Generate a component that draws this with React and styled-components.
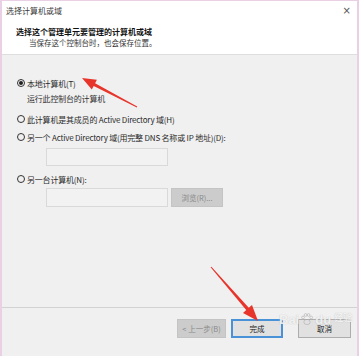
import React from 'react';
import styled, { createGlobalStyle } from 'styled-components';

const GlobalStyle = createGlobalStyle`
  html, body {
    margin: 0;
    padding: 0;
    background: #ffffff;
  }
  body {
    font-family: "Noto Sans CJK SC", "Noto Sans", sans-serif;
  }
`;

const Window = styled.div`
  position: relative;
  box-sizing: border-box;
  width: 359px;
  height: 356px;
  border: 2px solid #ead0e4;
  border-top-width: 1px;
  border-bottom: none;
  display: flex;
  flex-direction: column;
  background: #f0f0f0;
  overflow: hidden;
`;

const Header = styled.div`
  background: #ffffff;
  height: 54px;
  box-sizing: border-box;
  border-bottom: 1px solid #dedede;
  display: flex;
  flex-direction: column;
`;

const TitleBar = styled.div`
  height: 19px;
  display: flex;
  align-items: center;
  justify-content: space-between;
  padding: 0 6px 0 4px;
  font-size: 8px;
  color: #3a3a3a;
`;

const Close = styled.span`
  font-size: 10px;
  color: #555;
  font-family: "DejaVu Sans", sans-serif;
  line-height: 1;
`;

const Heading = styled.div`
  margin: 6px 0 0 14px;
  font-size: 8px;
  line-height: 11px;
  font-weight: bold;
  color: #111;
`;

const SubHeading = styled.div`
  margin-left: 27px;
  font-size: 7.5px;
  line-height: 11px;
  color: #333;
`;

const Body = styled.div`
  flex: 1;
  padding: 22px 0 0 15px;
  display: flex;
  flex-direction: column;
  align-items: flex-start;
`;

const RadioRow = styled.label`
  display: flex;
  align-items: center;
  gap: 2px;
  height: 12px;
  margin-top: ${(p) => p.$gap || 0}px;
  font-size: 8px;
  letter-spacing: -0.2px;
  color: #2a2a2a;
  white-space: nowrap;
`;

const Circle = styled.span`
  box-sizing: border-box;
  width: 8px;
  height: 8px;
  border-radius: 50%;
  border: 1px solid #333;
  display: flex;
  align-items: center;
  justify-content: center;
  &::after {
    content: '';
    display: ${(p) => (p.$on ? 'block' : 'none')};
    width: 4px;
    height: 4px;
    border-radius: 50%;
    background: #222;
  }
`;

const Desc = styled.div`
  margin: 4px 0 0 10px;
  height: 12px;
  line-height: 12px;
  font-size: 8px;
  letter-spacing: -0.2px;
  color: #333;
`;

const FieldRow = styled.div`
  display: flex;
  gap: 3px;
  margin: ${(p) => p.$gap}px 0 0 29px;
`;

const TextBox = styled.div`
  box-sizing: border-box;
  width: 122px;
  height: ${(p) => p.$h}px;
  border: 1px solid #d9d9d9;
  background: #f2f2f2;
`;

const Btn = styled.div`
  box-sizing: border-box;
  width: ${(p) => p.$w}px;
  height: 19px;
  display: flex;
  align-items: center;
  justify-content: center;
  font-size: 7.5px;
  white-space: nowrap;
  background: ${(p) => (p.$disabled ? '#cccccc' : '#e1e1e1')};
  color: ${(p) => (p.$disabled ? '#8a8a8a' : '#1a1a1a')};
  border: ${(p) =>
    p.$primary ? '2px solid #4a92d8' : p.$disabled ? '1px solid #c4c4c4' : '1px solid #adadad'};
`;

const Footer = styled.div`
  height: 37px;
  border-top: 1px solid #d2d2d2;
  display: flex;
  justify-content: flex-end;
  align-items: flex-start;
  padding: 11px 6px 0 0;
  gap: 5px;
`;

const Spacer = styled.span`
  width: 5px;
`;

const Watermark = styled.div`
  position: absolute;
  left: 277px;
  top: 311px;
  display: flex;
  align-items: flex-start;
  gap: 1px;
  font-family: "Liberation Sans", sans-serif;
  font-size: 13px;
  line-height: 15px;
  font-weight: bold;
  color: rgba(255, 255, 255, 0.8);
  text-shadow: 0 0 1px rgba(160, 160, 160, 0.7);
  pointer-events: none;
`;

const WmCn = styled.span`
  font-family: "Noto Sans CJK SC", sans-serif;
  font-size: 9px;
  line-height: 11px;
  margin-left: 2px;
`;

const Overlay = styled.svg`
  position: absolute;
  left: -2px;
  top: -1px;
  pointer-events: none;
`;

function arrowPoints(tx, ty, hx, hy, headLen, headW, w0, w1) {
  const dx = hx - tx;
  const dy = hy - ty;
  const len = Math.hypot(dx, dy);
  const ux = dx / len;
  const uy = dy / len;
  const nx = -uy;
  const ny = ux;
  const bx = hx - ux * headLen;
  const by = hy - uy * headLen;
  const pts = [
    [tx + (nx * w0) / 2, ty + (ny * w0) / 2],
    [bx + (nx * w1) / 2, by + (ny * w1) / 2],
    [bx + (nx * headW) / 2, by + (ny * headW) / 2],
    [hx, hy],
    [bx - (nx * headW) / 2, by - (ny * headW) / 2],
    [bx - (nx * w1) / 2, by - (ny * w1) / 2],
    [tx - (nx * w0) / 2, ty - (ny * w0) / 2],
  ];
  return pts.map((p) => p.map((v) => v.toFixed(1)).join(',')).join(' ');
}

function Arrows() {
  return (
    <Overlay width="360" height="356" viewBox="0 0 360 356">
      <polygon points={arrowPoints(137, 107, 82, 78, 14, 11, 1, 3)} fill="#e8352c" />
      <polygon points={arrowPoints(211, 267, 258, 321, 16, 12, 1, 3.5)} fill="#e8352c" />
    </Overlay>
  );
}

function Paw() {
  return (
    <svg width="14" height="14" viewBox="0 0 14 14">
      <g fill="none" stroke="rgba(170,170,170,0.7)" strokeWidth="0.8">
        <ellipse cx="7" cy="10" rx="3.2" ry="2.6" />
        <circle cx="3" cy="5.5" r="1.4" />
        <circle cx="5.6" cy="3" r="1.4" />
        <circle cx="8.6" cy="3" r="1.4" />
        <circle cx="11.2" cy="5.5" r="1.4" />
      </g>
    </svg>
  );
}

export default function App() {
  return (
    <>
      <GlobalStyle />
      <Window>
        <Header>
          <TitleBar>
            <span>选择计算机或域</span>
            <Close>×</Close>
          </TitleBar>
          <Heading>选择这个管理单元要管理的计算机或域</Heading>
          <SubHeading>当保存这个控制台时，也会保存位置。</SubHeading>
        </Header>
        <Body>
          <RadioRow>
            <Circle $on />
            本地计算机(T)
          </RadioRow>
          <Desc>运行此控制台的计算机</Desc>
          <RadioRow $gap={8}>
            <Circle />
            此计算机是其成员的 Active Directory 域(H)
          </RadioRow>
          <RadioRow $gap={6}>
            <Circle />
            另一个 Active Directory 域(用完整 DNS 名称或 IP 地址)(D):
          </RadioRow>
          <FieldRow $gap={5}>
            <TextBox $h={18} />
          </FieldRow>
          <RadioRow $gap={7}>
            <Circle />
            另一台计算机(N):
          </RadioRow>
          <FieldRow $gap={3}>
            <TextBox $h={19} />
            <Btn $w={52} $disabled>
              浏览(R)...
            </Btn>
          </FieldRow>
        </Body>
        <Footer>
          <Btn $w={49} $disabled>
            &lt; 上一步(B)
          </Btn>
          <Btn $w={52} $primary>
            完成
          </Btn>
          <Spacer />
          <Btn $w={53}>取消</Btn>
        </Footer>
        <Watermark>
          Bai
          <Paw />
          du
          <WmCn>经验</WmCn>
        </Watermark>
        <Arrows />
      </Window>
    </>
  );
}
